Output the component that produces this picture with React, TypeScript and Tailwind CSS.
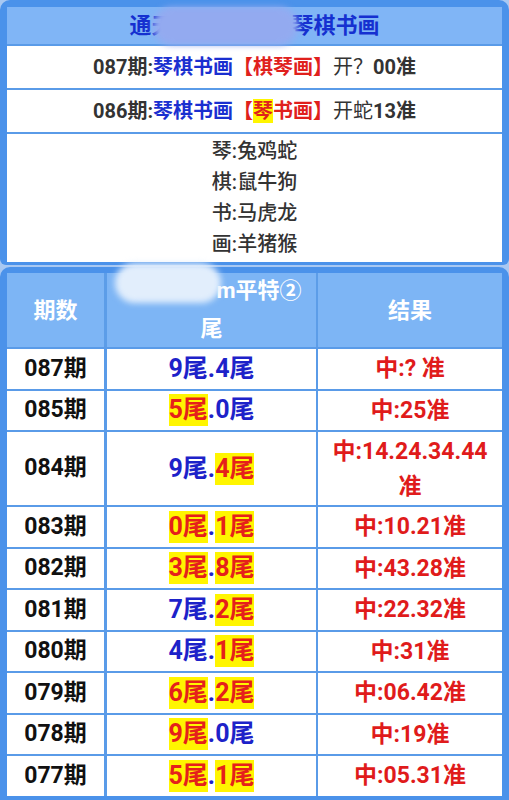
import React from 'react'

const font = { fontFamily: 'Roboto, "Noto Sans CJK SC", sans-serif' }

type Part = { t: string; hl?: boolean }

const rows: { qi: string; a: Part; b: Part; res: string; tall?: boolean }[] = [
  { qi: '087期', a: { t: '9尾' }, b: { t: '4尾' }, res: '中:? 准' },
  { qi: '085期', a: { t: '5尾', hl: true }, b: { t: '0尾' }, res: '中:25准' },
  { qi: '084期', a: { t: '9尾' }, b: { t: '4尾', hl: true }, res: '中:14.24.34.44准', tall: true },
  { qi: '083期', a: { t: '0尾', hl: true }, b: { t: '1尾', hl: true }, res: '中:10.21准' },
  { qi: '082期', a: { t: '3尾', hl: true }, b: { t: '8尾', hl: true }, res: '中:43.28准' },
  { qi: '081期', a: { t: '7尾' }, b: { t: '2尾', hl: true }, res: '中:22.32准' },
  { qi: '080期', a: { t: '4尾' }, b: { t: '1尾', hl: true }, res: '中:31准' },
  { qi: '079期', a: { t: '6尾', hl: true }, b: { t: '2尾', hl: true }, res: '中:06.42准' },
  { qi: '078期', a: { t: '9尾', hl: true }, b: { t: '0尾' }, res: '中:19准' },
  { qi: '077期', a: { t: '5尾', hl: true }, b: { t: '1尾', hl: true }, res: '中:05.31准' },
]

const Tail = ({ p }: { p: Part }) =>
  p.hl ? (
    <span className="bg-[#fff500] text-[#e5201b]">{p.t}</span>
  ) : (
    <span className="text-[#1d22c9]">{p.t}</span>
  )

export default function App() {
  return (
    <div className="w-[509px] h-[800px] overflow-hidden bg-[#a8c8f2]" style={font}>
      {/* top panel */}
      <div className="bg-[#4b92ea] rounded-t-[10px] rounded-b-[6px] pt-[7px] px-[7px] pb-[3px]">
        <div className="relative h-[37px] bg-[#80b5f6] flex items-center justify-center text-[22px] font-bold text-[#1530d0]">
          <span>通天</span>
          <span className="inline-block w-[118px]" />
          <span>琴棋书画</span>
          <div className="absolute left-[146px] top-[0px] w-[145px] h-[38px] rounded-full bg-[#93aaf0] blur-[3px]" />
        </div>
        <div className="h-[44px] border-t-2 border-[#5a9be8] bg-white flex items-center justify-center text-[20px] font-bold text-[#333]">
          <span>087期:</span>
          <span className="text-[#1a2fd0]">琴棋书画</span>
          <span className="text-[#e0201c]">【棋琴画】</span>
          <span className="font-normal">开？</span>
          <span>00准</span>
        </div>
        <div className="h-[44px] border-t-2 border-[#5a9be8] bg-white flex items-center justify-center text-[20px] font-bold text-[#333]">
          <span>086期:</span>
          <span className="text-[#1a2fd0]">琴棋书画</span>
          <span className="text-[#e0201c]">
            【<span className="bg-[#fff500]">琴</span>书画】
          </span>
          <span className="font-normal">开蛇</span>
          <span>13准</span>
        </div>
        <div className="h-[130px] border-t-2 border-[#5a9be8] bg-white flex flex-col items-center justify-center text-[20px] leading-[31px] font-medium text-[#333]">
          <div>琴:兔鸡蛇</div>
          <div>棋:鼠牛狗</div>
          <div>书:马虎龙</div>
          <div>画:羊猪猴</div>
        </div>
      </div>

      {/* table panel */}
      <div className="mt-[2px] bg-[#4b92ea] rounded-t-[10px] pt-[6px] px-[7px] h-[600px]">
        <div className="flex h-[74px] bg-[#7db5f5] text-white font-bold text-[22px]">
          <div className="w-[97px] flex items-center justify-center">期数</div>
          <div className="relative w-[214px] border-l-[3px] border-r-2 border-[#5c9de8] flex flex-col items-center justify-center leading-[38px]">
            <div>
              <span className="inline-block w-[95px]" />m平特②
            </div>
            <div>尾</div>
            <div className="absolute left-[8px] top-[-10px] w-[106px] h-[40px] rounded-full bg-[#e2eefc] blur-[3px]" />
          </div>
          <div className="flex-1 flex items-center justify-center">结果</div>
        </div>
        {rows.map((r, i) => (
          <div
            key={i}
            className={`flex border-t-2 border-[#5a9be8] bg-white font-bold ${r.tall ? 'h-[75px]' : 'h-[41.5px]'}`}
          >
            <div className="w-[97px] flex items-center justify-center text-[23px] text-[#111]">{r.qi}</div>
            <div className="w-[214px] border-l-[3px] border-r-2 border-[#5a9be8] flex items-center justify-center text-[25px] leading-[32px]">
              <Tail p={r.a} />
              <span className="text-[#1d22c9]">.</span>
              <Tail p={r.b} />
            </div>
            <div className="flex-1 px-2 flex items-center justify-center text-center text-[23px] leading-[35px] text-[#e01b1b]">
              {r.res}
            </div>
          </div>
        ))}
      </div>
    </div>
  )
}
